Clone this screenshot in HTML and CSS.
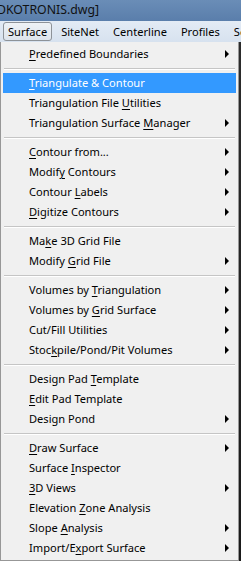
FILE: index.html
```html
<!DOCTYPE html>
<html>
<head>
<meta charset="utf-8">
<link rel="stylesheet" href="styles.css">
</head>
<body>
<div class="screen">
  <div class="titlebar"><span class="title">DKOTRONIS.dwg]</span></div>
  <div class="menubar">
    <span class="mb-item active">Surface</span>
    <span class="mb-item">SiteNet</span>
    <span class="mb-item">Centerline</span>
    <span class="mb-item">Profiles</span>
    <span class="mb-item">Se</span>
  </div>
  <div class="body">
    <div class="menu">
      <div class="item sub"><span><u>P</u>redefined Boundaries</span></div>
      <div class="sep"></div>
      <div class="item hl"><span><u>T</u>riangulate &amp; Contour</span></div>
      <div class="item"><span>Triangulation File <u>U</u>tilities</span></div>
      <div class="item sub"><span>Triangulation Surface <u>M</u>anager</span></div>
      <div class="sep"></div>
      <div class="item sub"><span><u>C</u>ontour from...</span></div>
      <div class="item sub"><span>Modif<u>y</u> Contours</span></div>
      <div class="item sub"><span>Contour <u>L</u>abels</span></div>
      <div class="item sub"><span><u>D</u>igitize Contours</span></div>
      <div class="sep"></div>
      <div class="item"><span>Ma<u>k</u>e 3D Grid File</span></div>
      <div class="item sub"><span>Modify <u>G</u>rid File</span></div>
      <div class="sep"></div>
      <div class="item sub"><span>Volumes by <u>T</u>riangulation</span></div>
      <div class="item sub"><span>Volumes by <u>G</u>rid Surface</span></div>
      <div class="item sub"><span>Cut/Fill Utilities</span></div>
      <div class="item sub"><span>Stoc<u>k</u>pile/Pond/Pit Volumes</span></div>
      <div class="sep"></div>
      <div class="item"><span>Design Pad <u>T</u>emplate</span></div>
      <div class="item"><span><u>E</u>dit Pad Template</span></div>
      <div class="item sub"><span>Design Pond</span></div>
      <div class="sep"></div>
      <div class="item sub"><span><u>D</u>raw Surface</span></div>
      <div class="item"><span>Surface <u>I</u>nspector</span></div>
      <div class="item sub"><span><u>3</u>D Views</span></div>
      <div class="item"><span>Elevation <u>Z</u>one Analysis</span></div>
      <div class="item sub"><span>Slope <u>A</u>nalysis</span></div>
      <div class="item sub"><span>Import/E<u>x</u>port Surface</span></div>
    </div>
    <div class="backdrop"></div>
  </div>
</div>
</body>
</html>
```

FILE: styles.css
```css
* { box-sizing: border-box; }
html, body { margin: 0; padding: 0; }
body {
  width: 241px;
  height: 561px;
  overflow: hidden;
  font-family: "Noto Sans", "Open Sans", sans-serif;
  font-size: 11.1px;
  color: #000;
  background: #f0f0f0;
}
.screen { display: flex; flex-direction: column; height: 561px; }
.titlebar {
  height: 21px;
  background: linear-gradient(#6a8db7, #5a7eab);
  overflow: hidden;
  white-space: nowrap;
}
.title {
  display: block;
  margin-left: -3px;
  padding-top: 1px;
  font-size: 12.3px;
  line-height: 18px;
  color: #111;
}
.menubar {
  height: 21px;
  display: flex;
  align-items: center;
  padding-left: 3px;
  background: linear-gradient(#e3ebf5, #d7e2ef);
  white-space: nowrap;
  overflow: hidden;
}
.mb-item {
  padding: 0 6px;
  height: 19px;
  line-height: 18px;
  border: 1px solid transparent;
  font-size: 11.1px;
}
.mb-item.active {
  padding: 0 4px;
  margin-right: 2px;
  border-color: #8d9298;
  border-radius: 3px;
  background: linear-gradient(#eef2f6, #dde4ec);
}
.body { flex: 1; display: flex; min-height: 0; }
.menu {
  width: 239px;
  height: 100%;
  border: 1px solid #979797;
  border-top: none;
  background: #f0f0f0;
  padding: 2px 2px 0 2px;
  display: flex;
  flex-direction: column;
}
.backdrop {
  flex: 1;
  background: linear-gradient(#2c2c2c, #1a1a1a);
}
.item {
  height: 20px;
  line-height: 20px;
  padding-left: 26px;
  position: relative;
  white-space: nowrap;
}
.item u { text-decoration: underline; text-underline-offset: 2px; }
.item.hl {
  background: #3399ff;
  color: #fff;
}
.item.sub::after {
  content: "";
  position: absolute;
  right: 7px;
  top: 6px;
  border-left: 4px solid #000;
  border-top: 4px solid transparent;
  border-bottom: 4px solid transparent;
}
.sep {
  height: 9px;
  margin: 0 1px;
  display: flex;
  flex-direction: column;
  justify-content: center;
}
.sep::before {
  content: "";
  display: block;
  height: 1px;
  background: #c5c5c5;
  border-bottom: 1px solid #fff;
  box-sizing: content-box;
}
```
